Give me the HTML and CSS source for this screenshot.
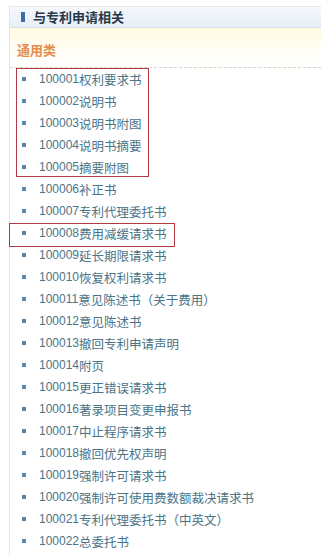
FILE: index.html
```html
<!DOCTYPE html>
<html lang="zh">
<head>
<meta charset="utf-8">
<link rel="stylesheet" href="styles.css">
</head>
<body>
<div class="panel">
  <div class="head"><span class="marker"></span><span class="title">与专利申请相关</span></div>
  <div class="sub"><span class="cat">通用类</span></div>
  <ul class="list">
    <li><span class="num">100001</span><span class="name">权利要求书</span></li>
    <li><span class="num">100002</span><span class="name">说明书</span></li>
    <li><span class="num">100003</span><span class="name">说明书附图</span></li>
    <li><span class="num">100004</span><span class="name">说明书摘要</span></li>
    <li><span class="num">100005</span><span class="name">摘要附图</span></li>
    <li><span class="num">100006</span><span class="name">补正书</span></li>
    <li><span class="num">100007</span><span class="name">专利代理委托书</span></li>
    <li><span class="num">100008</span><span class="name">费用减缓请求书</span></li>
    <li><span class="num">100009</span><span class="name">延长期限请求书</span></li>
    <li><span class="num">100010</span><span class="name">恢复权利请求书</span></li>
    <li><span class="num">100011</span><span class="name">意见陈述书（关于费用）</span></li>
    <li><span class="num">100012</span><span class="name">意见陈述书</span></li>
    <li><span class="num">100013</span><span class="name">撤回专利申请声明</span></li>
    <li><span class="num">100014</span><span class="name">附页</span></li>
    <li><span class="num">100015</span><span class="name">更正错误请求书</span></li>
    <li><span class="num">100016</span><span class="name">著录项目变更申报书</span></li>
    <li><span class="num">100017</span><span class="name">中止程序请求书</span></li>
    <li><span class="num">100018</span><span class="name">撤回优先权声明</span></li>
    <li><span class="num">100019</span><span class="name">强制许可请求书</span></li>
    <li><span class="num">100020</span><span class="name">强制许可使用费数额裁决请求书</span></li>
    <li><span class="num">100021</span><span class="name">专利代理委托书（中英文）</span></li>
    <li><span class="num">100022</span><span class="name">总委托书</span></li>
  </ul>
  <div class="mark mark-a"></div>
  <div class="mark mark-b"></div>
</div>
</body>
</html>
```
FILE: styles.css
```css
html, body {
  margin: 0;
  padding: 0;
  background: #ffffff;
}
body {
  width: 321px;
  height: 555px;
  overflow: hidden;
  font-family: "Liberation Sans", "Noto Sans CJK SC", sans-serif;
}
.panel {
  position: relative;
  margin: 6px 0 0 9px;
  border-left: 1px solid #e2e5e9;
  min-height: 560px;
}
.head {
  height: 20px;
  border-top: 1px solid #e4e7eb;
  border-bottom: 1px solid #d9e0e8;
  background: linear-gradient(#f5f8fc, #e9eff8);
  display: flex;
  align-items: center;
  padding-left: 11px;
  gap: 8px;
}
.marker {
  width: 4px;
  height: 10px;
  background: #3e6fa3;
}
.title {
  font-family: "Noto Sans CJK SC", sans-serif;
  font-size: 13px;
  font-weight: bold;
  color: #263849;
  line-height: 20px;
}
.sub {
  height: 40px;
  background: linear-gradient(#fffbe3, #fffdf4 60%, #ffffff);
  border-bottom: 1px dashed #d4d4d4;
  display: flex;
  align-items: center;
  padding-left: 7px;
  padding-top: 4px;
  box-sizing: border-box;
}
.cat {
  font-family: "Noto Sans CJK SC", sans-serif;
  font-size: 13px;
  font-weight: bold;
  color: #e58c4f;
}
.list {
  list-style: none;
  margin: 0;
  padding: 0;
}
.list li {
  height: 22px;
  display: flex;
  align-items: center;
  padding-left: 12px;
  color: #4b7487;
}
.list li::before {
  content: "";
  width: 4px;
  height: 4px;
  background: #5b87ad;
  margin-right: 13px;
  flex: none;
}
.num {
  font-family: "Liberation Sans", sans-serif;
  font-size: 12px;
}
.name {
  font-family: "Noto Sans CJK SC", sans-serif;
  font-size: 12.5px;
}
.mark {
  position: absolute;
  border: 1px solid #b23b42;
  box-sizing: border-box;
}
.mark-a {
  left: 6px;
  top: 62px;
  width: 133px;
  height: 109px;
}
.mark-b {
  left: -1px;
  top: 217px;
  width: 166px;
  height: 24px;
}
```
